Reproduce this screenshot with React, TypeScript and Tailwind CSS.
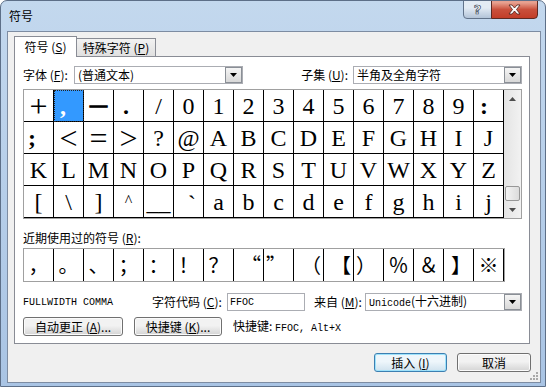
import type { ReactNode } from "react";

const cjk = "font-['Noto_Sans_CJK_SC',sans-serif]";
const mono = "font-['Liberation_Mono',monospace]";

const GRID: string[][] = [
  ["+", ",", "—", ".", "/", "0", "1", "2", "3", "4", "5", "6", "7", "8", "9", ":"],
  [";", "<", "=", ">", "?", "@", "A", "B", "C", "D", "E", "F", "G", "H", "I", "J"],
  ["K", "L", "M", "N", "O", "P", "Q", "R", "S", "T", "U", "V", "W", "X", "Y", "Z"],
  ["[", "\\", "]", "^", "__", "`", "a", "b", "c", "d", "e", "f", "g", "h", "i", "j"],
];

// placement + look for cells that differ from a centred serif glyph
const special: Record<string, string> = {
  "+": "items-center justify-center text-[32px]",
  "<": "items-center justify-center text-[32px]",
  "=": "items-center justify-center text-[32px]",
  ">": "items-center justify-center text-[32px]",
  ",": "items-center justify-start pl-[6px] font-bold text-white bg-[#3399ff] outline-1 outline-dotted -outline-offset-1 outline-[#222]",
  "—": "items-center justify-center font-bold text-[17px] [-webkit-text-stroke:1.3px_black]",
  ".": "items-center justify-start pl-[9px] font-bold",
  ":": "items-center justify-start pl-[6px] font-bold",
  ";": "items-center justify-start pl-[4px] font-bold",
  "^": "items-start justify-center pt-[7px] text-[16px]",
  "__": "items-end justify-center pb-[3px]",
  "`": "items-start justify-end pr-[7px] pt-[6px]",
};

const RECENT = ["，", "。", "、", "；", "：", "！", "？", "“", "”", "（", "【", "）", "％", "＆", "】", "※"];
const recentPos: Record<string, string> = {
  "“": "justify-end",
  "”": "justify-start",
  "（": "justify-end",
  "【": "justify-end",
  "）": "justify-start",
  "】": "justify-end",
};

function Mn({ k }: { k: string }) {
  return (
    <>
      (<span className="underline underline-offset-1">{k}</span>)
    </>
  );
}

function Arrow() {
  return (
    <div className="flex h-full w-[17px] shrink-0 items-center justify-center border border-[#8a8f96] bg-linear-to-b from-[#f5f5f5] to-[#d8d8d8]">
      <svg width="7" height="4" viewBox="0 0 7 4">
        <path d="M0 0h7L3.5 4z" fill="#000" />
      </svg>
    </div>
  );
}

function Combo({ children, w }: { children: ReactNode; w: string }) {
  return (
    <div className={`flex h-[18px] items-center border border-[#abadb3] bg-white ${w}`}>
      <div className="flex-1 whitespace-nowrap pl-[3px] text-[12px] leading-[16px]">{children}</div>
      <Arrow />
    </div>
  );
}

function Btn({ children, w }: { children: ReactNode; w: string }) {
  return (
    <div
      className={`flex h-[19px] items-center justify-center rounded-[3px] border border-[#707070] bg-linear-to-b from-[#f2f2f2] from-45% to-[#d4d4d4] text-[12px] shadow-[inset_0_0_0_1px_#fbfbfb] ${w}`}
    >
      {children}
    </div>
  );
}

export default function App() {
  return (
    <div className={`flex h-[387px] w-[546px] flex-col overflow-hidden rounded-t-[7px] border border-[#5d6f88] bg-linear-to-b from-[#c3d8ee] to-[#a9c4e4] pr-[4px] pb-[3px] pl-[6px] text-black ${cjk}`}>
      {/* title bar */}
      <div className="flex h-[30px] items-start justify-between">
        <span className="pt-[6px] pl-[2px] text-[12px]">符号</span>
        <div className="mr-[3px] flex -mt-px">
          <div className="flex h-[19px] w-[29px] items-center justify-center rounded-bl-[4px] border border-[#62738a] bg-linear-to-b from-[#e3ebf4] from-40% to-[#b3c4d8]">
            <span className="font-['DejaVu_Sans',sans-serif] text-[13px] font-bold text-white [-webkit-text-stroke:0.7px_#3c4859]">?</span>
          </div>
          <div className="-ml-px flex h-[19px] w-[47px] items-center justify-center rounded-br-[4px] border border-[#5d2a23] bg-linear-to-b from-[#e7a08f] from-10% via-[#c9503c] via-50% to-[#c23d28]">
            <svg width="13" height="11" viewBox="0 0 13 11">
              <path d="M1 1h3l2.5 3 2.5-3h3L8.5 5.5 12 10H9L6.5 7 4 10H1l3.5-4.5z" fill="#fff" stroke="#4a2019" strokeWidth="0.8" />
            </svg>
          </div>
        </div>
      </div>

      {/* dialog body */}
      <div className="relative flex flex-1 flex-col border border-[#7d8ca2] bg-[#f0f0f0] pt-[4px] pl-[6px]">
        <div className="-mb-px flex items-end">
          <div className="relative z-10 flex h-[21px] w-[63px] items-center justify-center border border-b-0 border-[#898c95] bg-white text-[12px]">
            符号 <Mn k="S" />
          </div>
          <div className="-ml-px flex h-[19px] w-[80px] items-center justify-center border border-[#898c95] bg-linear-to-b from-[#f2f2f2] to-[#e0e0e0] text-[12px]">
            特殊字符 <Mn k="P" />
          </div>
        </div>

        <div className="flex h-[288px] w-[516px] flex-col border border-[#898c95] bg-white pt-[9px] pl-[8px]">
          <div className="flex h-[18px] w-[499px] items-center justify-between text-[12px]">
            <div className="flex items-center">
              <span className="w-[51px]">
                字体 <Mn k="F" />:
              </span>
              <Combo w="w-[169px]">(普通文本)</Combo>
            </div>
            <div className="flex items-center gap-[5px]">
              <span>
                子集 <Mn k="U" />:
              </span>
              <Combo w="w-[169px]">半角及全角字符</Combo>
            </div>
          </div>

          {/* character grid */}
          <div className="mt-[5px] flex w-[499px] border border-[#a0a0a0]">
            <div className="grid grid-cols-[repeat(16,30px)] font-['Liberation_Serif',serif] text-[24px]">
              {GRID.flat().map((c, i) => (
                <div
                  key={i}
                  className={`flex h-[32px] w-[30px] border-r border-b border-black leading-none ${special[c] ?? "items-center justify-center"}`}
                >
                  {c}
                </div>
              ))}
            </div>
            <div className="flex w-[17px] flex-col bg-linear-to-r from-[#e4e4e4] to-[#f2f2f2]">
              <div className="flex h-[17px] items-center justify-center">
                <svg width="7" height="4" viewBox="0 0 7 4">
                  <path d="M0 4h7L3.5 0z" fill="#4d4d4d" />
                </svg>
              </div>
              <div className="flex flex-1 flex-col justify-end px-px">
                <div className="h-[15px] rounded-[2px] border border-[#979797] bg-linear-to-r from-[#f4f4f4] to-[#dcdcdc]" />
              </div>
              <div className="flex h-[17px] items-center justify-center">
                <svg width="7" height="4" viewBox="0 0 7 4">
                  <path d="M0 0h7L3.5 4z" fill="#4d4d4d" />
                </svg>
              </div>
            </div>
          </div>

          <div className="mt-[11px] h-[16px] text-[12px] leading-[16px]">
            近期使用过的符号 <Mn k="R" />:
          </div>
          <div className="mt-[2px] flex w-[482px] border border-[#a0a0a0]">
            {RECENT.map((c, i) => (
              <div
                key={i}
                className={`flex h-[32px] w-[30px] items-center border-r border-black px-[2px] text-[20px] leading-none ${recentPos[c] ?? "justify-center"}`}
              >
                {c}
              </div>
            ))}
          </div>

          <div className="mt-[11px] flex h-[18px] w-[499px] items-center text-[12px]">
            <span className={`w-[129px] text-[10px] ${mono}`}>FULLWIDTH COMMA</span>
            <span className="w-[75px]">
              字符代码 <Mn k="C" />:
            </span>
            <div className={`flex h-[18px] w-[78px] items-center border border-[#abadb3] bg-white pl-[2px] text-[10px] ${mono}`}>FFOC</div>
            <span className="ml-[9px] w-[51px]">
              来自 <Mn k="M" />:
            </span>
            <Combo w="w-[157px]">
              <span className={`text-[10px] ${mono}`}>Unicode</span>(十六进制)
            </Combo>
          </div>

          <div className="mt-[6px] flex items-center gap-[11px] text-[12px]">
            <Btn w="w-[100px]">
              自动更正 <Mn k="A" />...
            </Btn>
            <Btn w="w-[88px]">
              快捷键 <Mn k="K" />...
            </Btn>
            <span>
              快捷键: <span className={`text-[10px] ${mono}`}>FFOC, Alt+X</span>
            </span>
          </div>
        </div>

        <div className="mt-[9px] flex justify-end gap-[10px] pr-[9px] text-[12px]">
          <div className="flex h-[19px] w-[73px] items-center justify-center rounded-[3px] border border-[#3c7fb1] bg-linear-to-b from-[#eef6fb] from-45% to-[#cfe2ee] shadow-[inset_0_0_0_1px_#9ee2fb]">
            插入 <Mn k="I" />
          </div>
          <Btn w="w-[74px]">取消</Btn>
        </div>

        <svg className="absolute right-[1px] bottom-[1px]" width="11" height="11" viewBox="0 0 11 11">
          <g fill="#a8a8a8">
            <rect x="8" y="2" width="2" height="2" />
            <rect x="5" y="5" width="2" height="2" />
            <rect x="8" y="5" width="2" height="2" />
            <rect x="2" y="8" width="2" height="2" />
            <rect x="5" y="8" width="2" height="2" />
            <rect x="8" y="8" width="2" height="2" />
          </g>
        </svg>
      </div>
    </div>
  );
}
